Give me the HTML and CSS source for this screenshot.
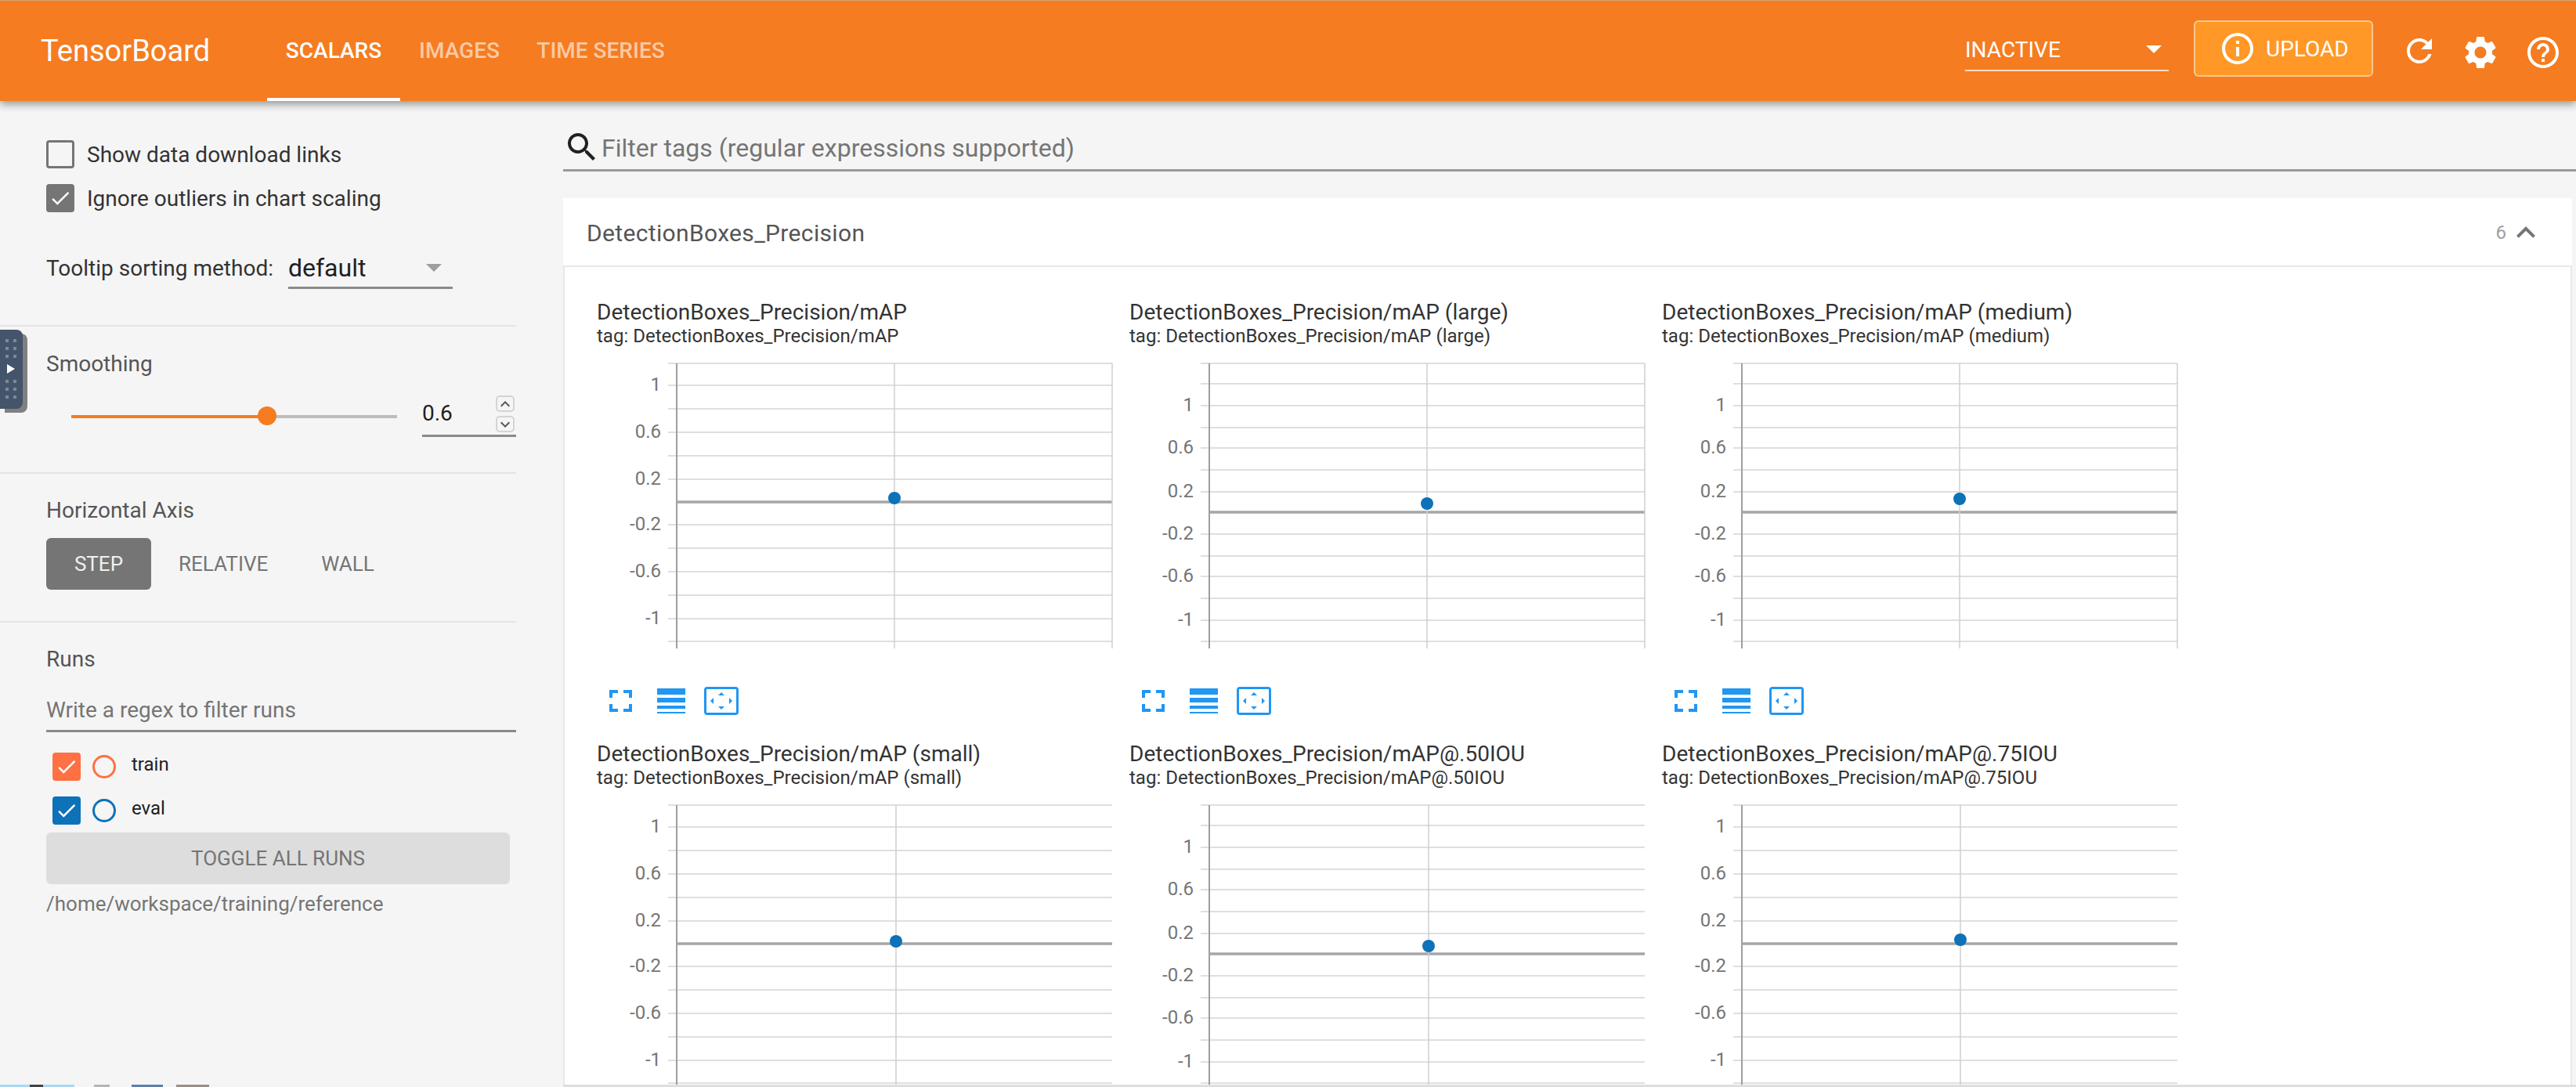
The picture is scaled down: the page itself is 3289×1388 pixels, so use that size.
FILE: index.html
```html
<!DOCTYPE html>
<html lang="en">
<head>
    <meta charset="UTF-8">
    <title>TensorBoard</title>
    <link rel="stylesheet" href="styles.css">
</head>
<body>
    <svg class="defs" width="0" height="0">
        <symbol id="grid-a" viewBox="0 0 662 370">
            <path class="grid" d="M91 4H658M91 32H658M91 62H658M91 92H658M91 122H658M91 152H658M91 210H658M91 240H658M91 270H658M91 300H658M91 330H658M91 359H658"/>
            <path class="axis" d="M102 4V368"/>
            <path class="zero" d="M102 181H658"/>
        </symbol>
        <symbol id="grid-b" viewBox="0 0 662 370">
            <path class="grid" d="M91 4H658M91 30H658M91 58H658M91 86H658M91 112H658M91 140H658M91 168H658M91 222H658M91 250H658M91 276H658M91 304H658M91 332H658M91 359H658"/>
            <path class="axis" d="M102 4V368"/>
            <path class="zero" d="M102 194H658"/>
        </symbol>
        <symbol id="ic-fullscreen" viewBox="0 0 29 28">
            <path d="M0 0H11V4H4V10H0ZM18 0H29V10H25V4H18ZM0 18H4V24H11V28H0ZM25 18H29V28H18V24H25Z"/>
        </symbol>
        <symbol id="ic-lines" viewBox="0 0 36 33">
            <path d="M0 0H36V8H0ZM0 12H36V18H0ZM0 22H36V26H0ZM0 30H36V32H0Z"/>
        </symbol>
        <symbol id="ic-fit" viewBox="0 0 44 36">
            <path fill-rule="evenodd" d="M4 0H40A4 4 0 0 1 44 4V32A4 4 0 0 1 40 36H4A4 4 0 0 1 0 32V4A4 4 0 0 1 4 0ZM3 3V33H41V3Z"/>
            <path d="M22 7L26 11H18ZM22 29L18 25H26ZM8 18L12 14V22ZM36 18L32 22V14Z"/>
        </symbol>
        <symbol id="ic-check" viewBox="0 0 24 24">
            <path d="M9 16.17L4.83 12l-1.42 1.41L9 19 21 7l-1.41-1.41z"/>
        </symbol>
        <symbol id="ic-chevron" viewBox="0 0 24 24">
            <path d="M7.41 15.41L12 10.83l4.59 4.58L18 14l-6-6-6 6z"/>
        </symbol>
    </svg>

    <header class="toolbar">
        <div class="brand">TensorBoard</div>
        <nav class="tabs">
            <a class="tab active">SCALARS</a>
            <a class="tab">IMAGES</a>
            <a class="tab">TIME SERIES</a>
        </nav>
        <div class="toolbar-right">
            <div class="inactive-select">
                <span>INACTIVE</span>
                <i class="caret caret-white"></i>
            </div>
            <button class="upload-btn">
                <svg viewBox="0 0 24 24" width="48" height="48"><path d="M11 7h2v2h-2zm0 4h2v6h-2zm1-9C6.48 2 2 6.48 2 12s4.48 10 10 10 10-4.48 10-10S17.52 2 12 2zm0 18c-4.41 0-8-3.59-8-8s3.59-8 8-8 8 3.59 8 8-3.59 8-8 8z"/></svg>
                UPLOAD
            </button>
            <svg class="tool-icon refresh" viewBox="0 0 24 24" width="48" height="48"><path d="M17.65 6.35C16.2 4.9 14.21 4 12 4c-4.42 0-7.99 3.58-7.99 8s3.57 8 7.99 8c3.73 0 6.84-2.55 7.73-6h-2.08c-.82 2.33-3.04 4-5.65 4-3.31 0-6-2.69-6-6s2.69-6 6-6c1.66 0 3.14.69 4.22 1.78L13 11h7V4l-2.35 2.35z"/></svg>
            <svg class="tool-icon gear" viewBox="0 0 24 24" width="50" height="50"><path d="M19.14 12.94c.04-.3.06-.61.06-.94 0-.32-.02-.64-.07-.94l2.03-1.58c.18-.14.23-.41.12-.61l-1.92-3.32c-.12-.22-.37-.29-.59-.22l-2.39.96c-.5-.38-1.03-.7-1.62-.94l-.36-2.54c-.04-.24-.24-.41-.48-.41h-3.84c-.24 0-.43.17-.47.41l-.36 2.54c-.59.24-1.13.57-1.62.94l-2.39-.96c-.22-.08-.47 0-.59.22L2.74 8.87c-.12.21-.08.47.12.61l2.03 1.58c-.05.3-.09.63-.09.94s.02.64.07.94l-2.03 1.58c-.18.14-.23.41-.12.61l1.92 3.32c.12.22.37.29.59.22l2.39-.96c.5.38 1.03.7 1.62.94l.36 2.54c.05.24.24.41.48.41h3.84c.24 0 .44-.17.47-.41l.36-2.54c.59-.24 1.13-.56 1.62-.94l2.39.96c.22.08.47 0 .59-.22l1.92-3.32c.12-.22.07-.47-.12-.61l-2.01-1.58zM12 15.6c-1.98 0-3.6-1.62-3.6-3.6s1.62-3.6 3.6-3.6 3.6 1.62 3.6 3.6-1.62 3.6-3.6 3.6z"/></svg>
            <svg class="tool-icon help" viewBox="0 0 24 24" width="48" height="48"><path d="M11 18h2v-2h-2v2zm1-16C6.48 2 2 6.48 2 12s4.48 10 10 10 10-4.48 10-10S17.52 2 12 2zm0 18c-4.41 0-8-3.59-8-8s3.59-8 8-8 8 3.59 8 8-3.59 8-8 8zm0-14c-2.21 0-4 1.79-4 4h2c0-1.1.9-2 2-2s2 .9 2 2c0 2-3 1.75-3 5h2c0-2.25 3-2.5 3-5 0-2.21-1.79-4-4-4z"/></svg>
        </div>
    </header>

    <div class="layout">
        <aside class="sidebar">
            <section class="side-section options">
                <label class="option"><span class="box"></span>Show data download links</label>
                <label class="option"><span class="box box-gray"><svg><use href="#ic-check"/></svg></span>Ignore outliers in chart scaling</label>
                <div class="tooltip-row">
                    <span>Tooltip sorting method:</span>
                    <div class="tooltip-select">default<i class="caret caret-gray"></i></div>
                </div>
            </section>

            <section class="side-section smoothing">
                <div class="side-title">Smoothing</div>
                <div class="slider-row">
                    <div class="slider">
                        <div class="slider-track"><div class="slider-fill"></div></div>
                        <div class="slider-thumb"></div>
                    </div>
                    <div class="number-input">
                        0.6
                        <div class="spin spin-up"><svg><use href="#ic-chevron"/></svg></div>
                        <div class="spin spin-down"><svg><use href="#ic-chevron"/></svg></div>
                    </div>
                </div>
            </section>

            <section class="side-section axis-section">
                <div class="side-title">Horizontal Axis</div>
                <div class="axis-buttons">
                    <div class="axis-btn step">STEP</div>
                    <div class="axis-btn relative">RELATIVE</div>
                    <div class="axis-btn wall">WALL</div>
                </div>
            </section>

            <section class="side-section runs">
                <div class="side-title">Runs</div>
                <div class="regex-input">Write a regex to filter runs</div>
                <div class="run-row">
                    <span class="box box-train"><svg><use href="#ic-check"/></svg></span>
                    <span class="ring ring-train"></span>
                    <span class="run-name">train</span>
                </div>
                <div class="run-row">
                    <span class="box box-eval"><svg><use href="#ic-check"/></svg></span>
                    <span class="ring ring-eval"></span>
                    <span class="run-name">eval</span>
                </div>
                <button class="toggle-btn">TOGGLE ALL RUNS</button>
                <div class="logdir">/home/workspace/training/reference</div>
            </section>
        </aside>

        <main class="content">
            <div class="filter-row">
                <svg class="search-icon" viewBox="0 0 24 24" width="48" height="48"><path d="M15.5 14h-.79l-.28-.27C15.41 12.59 16 11.11 16 9.5 16 5.91 13.09 3 9.5 3S3 5.91 3 9.5 5.91 16 9.5 16c1.61 0 3.09-.59 4.23-1.57l.27.28v.79l5 4.99L20.49 19l-4.99-5zm-6 0C7.01 14 5 11.99 5 9.5S7.01 5 9.5 5 14 7.01 14 9.5 11.99 14 9.5 14z"/></svg>
                <span>Filter tags (regular expressions supported)</span>
            </div>

            <div class="category">
                <div class="category-head">
                    <span class="category-name">DetectionBoxes_Precision</span>
                    <span class="category-count">6</span>
                    <svg class="category-chevron"><use href="#ic-chevron"/></svg>
                </div>
                <div class="tiles">
                    <div class="tile">
                        <div class="tile-title">DetectionBoxes_Precision/mAP</div>
                        <div class="tile-tag">tag: DetectionBoxes_Precision/mAP</div>
                        <svg class="chart" width="662" height="370" viewBox="0 0 662 370">
                            <use href="#grid-a" width="662" height="370"/>
                            <path class="axis-light" d="M658 4V368M380 4V368"/>
                            <text x="82" y="39">1</text><text x="82" y="99">0.6</text><text x="82" y="159">0.2</text>
                            <text x="82" y="217">-0.2</text><text x="82" y="277">-0.6</text><text x="82" y="337">-1</text>
                            <circle class="point" cx="380" cy="176" r="8"/>
                        </svg>
                        <div class="tile-actions">
                            <svg class="act-full"><use href="#ic-fullscreen"/></svg>
                            <svg class="act-lines"><use href="#ic-lines"/></svg>
                            <svg class="act-fit"><use href="#ic-fit"/></svg>
                        </div>
                    </div>
                    <div class="tile">
                        <div class="tile-title">DetectionBoxes_Precision/mAP (large)</div>
                        <div class="tile-tag">tag: DetectionBoxes_Precision/mAP (large)</div>
                        <svg class="chart" width="662" height="370" viewBox="0 0 662 370">
                            <use href="#grid-b" width="662" height="370"/>
                            <path class="axis-light" d="M658 4V368M380 4V368"/>
                            <text x="82" y="65">1</text><text x="82" y="119">0.6</text><text x="82" y="175">0.2</text>
                            <text x="82" y="229">-0.2</text><text x="82" y="283">-0.6</text><text x="82" y="339">-1</text>
                            <circle class="point" cx="380" cy="183" r="8"/>
                        </svg>
                        <div class="tile-actions">
                            <svg class="act-full"><use href="#ic-fullscreen"/></svg>
                            <svg class="act-lines"><use href="#ic-lines"/></svg>
                            <svg class="act-fit"><use href="#ic-fit"/></svg>
                        </div>
                    </div>
                    <div class="tile">
                        <div class="tile-title">DetectionBoxes_Precision/mAP (medium)</div>
                        <div class="tile-tag">tag: DetectionBoxes_Precision/mAP (medium)</div>
                        <svg class="chart" width="662" height="370" viewBox="0 0 662 370">
                            <use href="#grid-b" width="662" height="370"/>
                            <path class="axis-light" d="M658 4V368M380 4V368"/>
                            <text x="82" y="65">1</text><text x="82" y="119">0.6</text><text x="82" y="175">0.2</text>
                            <text x="82" y="229">-0.2</text><text x="82" y="283">-0.6</text><text x="82" y="339">-1</text>
                            <circle class="point" cx="380" cy="177" r="8"/>
                        </svg>
                        <div class="tile-actions">
                            <svg class="act-full"><use href="#ic-fullscreen"/></svg>
                            <svg class="act-lines"><use href="#ic-lines"/></svg>
                            <svg class="act-fit"><use href="#ic-fit"/></svg>
                        </div>
                    </div>
                    <div class="tile">
                        <div class="tile-title">DetectionBoxes_Precision/mAP (small)</div>
                        <div class="tile-tag">tag: DetectionBoxes_Precision/mAP (small)</div>
                        <svg class="chart" width="662" height="370" viewBox="0 0 662 370">
                            <use href="#grid-a" width="662" height="370"/>
                            <path class="axis-light" d="M382 4V368"/>
                            <text x="82" y="39">1</text><text x="82" y="99">0.6</text><text x="82" y="159">0.2</text>
                            <text x="82" y="217">-0.2</text><text x="82" y="277">-0.6</text><text x="82" y="337">-1</text>
                            <circle class="point" cx="382" cy="178" r="8"/>
                        </svg>
                    </div>
                    <div class="tile">
                        <div class="tile-title">DetectionBoxes_Precision/mAP@.50IOU</div>
                        <div class="tile-tag">tag: DetectionBoxes_Precision/mAP@.50IOU</div>
                        <svg class="chart" width="662" height="370" viewBox="0 0 662 370">
                            <use href="#grid-b" width="662" height="370"/>
                            <path class="axis-light" d="M382 4V368"/>
                            <text x="82" y="65">1</text><text x="82" y="119">0.6</text><text x="82" y="175">0.2</text>
                            <text x="82" y="229">-0.2</text><text x="82" y="283">-0.6</text><text x="82" y="339">-1</text>
                            <circle class="point" cx="382" cy="184" r="8"/>
                        </svg>
                    </div>
                    <div class="tile">
                        <div class="tile-title">DetectionBoxes_Precision/mAP@.75IOU</div>
                        <div class="tile-tag">tag: DetectionBoxes_Precision/mAP@.75IOU</div>
                        <svg class="chart" width="662" height="370" viewBox="0 0 662 370">
                            <use href="#grid-a" width="662" height="370"/>
                            <path class="axis-light" d="M381 4V368"/>
                            <text x="82" y="39">1</text><text x="82" y="99">0.6</text><text x="82" y="159">0.2</text>
                            <text x="82" y="217">-0.2</text><text x="82" y="277">-0.6</text><text x="82" y="337">-1</text>
                            <circle class="point" cx="381" cy="176" r="8"/>
                        </svg>
                    </div>
                </div>
            </div>
        </main>
    </div>

    <!-- page-capture handle that sits over the left edge -->
    <div class="side-handle">
        <div class="handle-dots"><i></i><i></i><i></i><i></i><i></i><i></i></div>
        <div class="handle-arrow"></div>
        <div class="handle-dots"><i></i><i></i><i></i><i></i><i></i><i></i></div>
    </div>

    <!-- sliver of the desktop taskbar at the very bottom of the capture -->
    <div class="taskbar-sliver">
        <i class="sliver-start"></i>
        <i class="sliver-a"></i>
        <i class="sliver-b"></i>
        <i class="sliver-c"></i>
    </div>
</body>
</html>
```

FILE: styles.css
```css
* {
    box-sizing: border-box;
}
html, body {
    margin: 0;
    height: 100%;
    overflow: hidden;
}
body {
    font-family: Roboto, "Liberation Sans", sans-serif;
    background-color: #f5f5f5;
    color: #212121;
    display: flex;
    flex-direction: column;
    font-size: 28px;
}
.defs {
    position: absolute;
}

/* toolbar */
.toolbar {
    height: 129px;
    flex: none;
    display: flex;
    align-items: center;
    padding-left: 52px;
    background-color: #f57c20;
    border-top: 1px solid #d9a679;
    box-shadow: 0 4px 10px rgba(0, 0, 0, 0.4);
    position: relative;
    z-index: 2;
    color: white;
}
.brand {
    font-size: 38px;
    width: 217px;
    margin-right: 72px;
    white-space: nowrap;
}
.tabs {
    display: flex;
    align-self: stretch;
}
.tab {
    width: 170px;
    display: flex;
    align-items: center;
    justify-content: center;
    font-weight: 500;
    color: rgba(255, 255, 255, 0.6);
    border-bottom: 4px solid transparent;
    padding-top: 2px;
}
.tab + .tab {
    width: 151px;
}
.tab:last-child {
    width: 210px;
}
.tab.active {
    color: white;
    border-bottom-color: white;
}
.toolbar-right {
    margin-left: auto;
    display: flex;
    align-items: center;
    height: 100%;
    padding-bottom: 2px;
}
.inactive-select {
    width: 251px;
    height: 36px;
    margin-top: 8px;
    box-sizing: content-box;
    display: flex;
    align-items: center;
    justify-content: space-between;
    font-size: 28px;
    padding-bottom: 8px;
    border-bottom: 2px solid #ffdcc0;
    padding-right: 9px;
}
.caret {
    display: block;
    width: 0;
    height: 0;
    border-left: 10px solid transparent;
    border-right: 10px solid transparent;
}
.caret-white {
    border-top: 10px solid white;
}
.caret-gray {
    border-top: 10px solid #9e9e9e;
}
.upload-btn {
    width: 229px;
    height: 72px;
    margin-left: 32px;
    margin-top: -4px;
    display: flex;
    align-items: center;
    padding: 0 0 0 30px;
    background-color: #ff9827;
    border: 2px solid #ffc78f;
    border-radius: 6px;
    color: white;
    font-family: inherit;
    font-size: 28px;
    font-weight: 400;
    gap: 12px;
}
.upload-btn svg, .tool-icon {
    fill: white;
    flex: none;
}
.tool-icon {
    margin-top: 6px;
}
.tool-icon.refresh {
    margin-left: 35px;
    margin-top: 2px;
}
.tool-icon.gear {
    margin-left: 29px;
}
.tool-icon.help {
    margin-left: 31px;
    margin-right: 18px;
}

/* layout */
.layout {
    flex: 1;
    display: flex;
    min-height: 0;
}
.sidebar {
    width: 719px;
    flex: none;
}
.side-section {
    width: 659px;
    padding-left: 59px;
    border-bottom: 2px solid #e4e4e4;
}
.side-title {
    line-height: 32px;
    color: #555;
}

/* options */
.options {
    padding-top: 50px;
    padding-bottom: 46px;
}
.option {
    display: flex;
    align-items: center;
    height: 36px;
    gap: 16px;
    color: #333;
}
.option + .option {
    margin-top: 20px;
}
.box {
    width: 36px;
    height: 36px;
    flex: none;
    border: 3px solid #757575;
    border-radius: 4px;
    display: flex;
    align-items: center;
    justify-content: center;
}
.box svg {
    width: 30px;
    height: 30px;
    fill: white;
    flex: none;
}
.box-gray {
    background-color: #757575;
}
.box-train {
    background-color: #ff7043;
    border-color: #ff7043;
}
.box-eval {
    background-color: #0d72b8;
    border-color: #0d72b8;
}
.tooltip-row {
    display: flex;
    align-items: flex-start;
    margin-top: 47px;
    height: 51px;
    line-height: 50px;
    color: #333;
}
.tooltip-select {
    width: 210px;
    height: 51px;
    margin-left: 19px;
    border-bottom: 3px solid #8a8a8a;
    font-size: 32px;
    display: flex;
    justify-content: space-between;
    align-items: center;
    padding-right: 14px;
    color: #212121;
}

/* smoothing */
.smoothing {
    padding-top: 32px;
    padding-bottom: 45px;
}
.slider-row {
    display: flex;
    margin-top: 24px;
    height: 53px;
}
.slider {
    position: relative;
    width: 416px;
    margin-left: 32px;
    display: flex;
    align-items: center;
}
.slider-track {
    width: 100%;
    height: 4px;
    background-color: #bdbdbd;
}
.slider-fill {
    width: 250px;
    height: 4px;
    background-color: #f57c20;
}
.slider-thumb {
    position: absolute;
    left: 238px;
    top: 14px;
    width: 24px;
    height: 24px;
    border-radius: 50%;
    background-color: #f57c20;
}
.number-input {
    position: relative;
    width: 120px;
    margin-left: 32px;
    border-bottom: 3px solid #8a8a8a;
    line-height: 46px;
    font-size: 28px;
}
.spin {
    position: absolute;
    right: 2px;
    width: 24px;
    height: 21px;
    border: 2px solid #d4d4d4;
    border-radius: 5px;
    display: flex;
    align-items: center;
    justify-content: center;
    background-color: #f5f5f5;
}
.spin svg {
    width: 24px;
    height: 24px;
    fill: #555;
    flex: none;
}
.spin-up {
    top: 0;
}
.spin-down {
    top: 26px;
}
.spin-down svg {
    transform: rotate(180deg);
}

/* horizontal axis */
.axis-section {
    padding-top: 31px;
    padding-bottom: 40px;
}
.axis-buttons {
    display: flex;
    margin-top: 19px;
}
.axis-btn {
    height: 66px;
    line-height: 66px;
    font-size: 26px;
    color: #757575;
    text-align: center;
}
.axis-btn.step {
    width: 134px;
    background-color: #757575;
    color: #f0f0f0;
    border-radius: 6px;
}
.axis-btn.relative {
    margin-left: 35px;
}
.axis-btn.wall {
    margin-left: 68px;
}

/* runs */
.runs {
    padding-top: 31px;
    border-bottom: none;
}
.regex-input {
    height: 54px;
    margin-top: 23px;
    line-height: 52px;
    border-bottom: 3px solid #8a8a8a;
    color: #757575;
}
.run-row {
    display: flex;
    align-items: center;
    height: 36px;
    margin-top: 20px;
    padding-left: 8px;
}
.regex-input + .run-row {
    margin-top: 26px;
}
.ring {
    width: 30px;
    height: 30px;
    margin-left: 15px;
    margin-right: 20px;
    border-radius: 50%;
    border: 3px solid;
}
.ring-train {
    border-color: #ff7043;
}
.ring-eval {
    border-color: #0d72b8;
}
.run-name {
    font-size: 24px;
    margin-bottom: 6px;
    color: #212121;
}
.toggle-btn {
    display: block;
    width: 592px;
    height: 66px;
    margin-top: 10px;
    border: none;
    border-radius: 6px;
    background-color: #dddddd;
    color: #757575;
    font-family: inherit;
    font-size: 26px;
}
.logdir {
    margin-top: 10px;
    line-height: 30px;
    font-size: 26px;
    color: #757575;
}

/* main column */
.content {
    flex: 1;
    min-width: 0;
    display: flex;
    flex-direction: column;
    overflow: hidden;
}
.filter-row {
    display: flex;
    align-items: center;
    flex: none;
    height: 90px;
    border-bottom: 3px solid #999;
    padding-top: 30px;
    font-size: 32px;
    color: #757575;
}
.filter-row span {
    margin-top: 2px;
}
.search-icon {
    fill: #212121;
    flex: none;
    margin-right: 1px;
}
.category {
    flex: 1;
    min-height: 0;
    overflow: hidden;
    margin-top: 34px;
    margin-right: 5px;
    background-color: white;
}
.category-head {
    display: flex;
    align-items: center;
    height: 88px;
    padding-left: 30px;
    padding-top: 2px;
    border-bottom: 2px solid #e8e8e8;
}
.category-name {
    font-size: 30px;
    letter-spacing: 0.35px;
    color: #555;
}
.category-count {
    margin-left: auto;
    font-size: 24px;
    color: #9e9e9e;
}
.category-chevron {
    width: 48px;
    height: 48px;
    fill: #757575;
    margin-left: 1px;
    margin-right: 35px;
}
.tiles {
    display: grid;
    grid-template-columns: repeat(3, 680px);
    grid-auto-rows: 564px;
    border-left: 2px solid #e8e8e8;
    border-right: 2px solid #e8e8e8;
    padding-top: 42px;
}
.tile {
    padding-left: 41px;
}
.tile-title {
    line-height: 32px;
    font-size: 28px;
    color: #333;
    white-space: nowrap;
}
.tile-tag {
    line-height: 26px;
    margin-top: 1px;
    font-size: 24px;
    color: #333;
    white-space: nowrap;
}
.chart {
    display: block;
    margin-top: 18px;
}
.chart text {
    font-size: 24px;
    fill: #757575;
    text-anchor: end;
}
.grid {
    stroke: #dfdfdf;
    stroke-width: 2;
    fill: none;
}
.axis {
    stroke: #9e9e9e;
    stroke-width: 2;
    fill: none;
}
.axis-light {
    stroke: #cfcfcf;
    stroke-width: 1.5;
    fill: none;
}
.zero {
    stroke: #a6a6a6;
    stroke-width: 3.5;
    fill: none;
}
.point {
    fill: #0d72b8;
}
.tile-actions {
    display: flex;
    align-items: center;
    margin-top: 47px;
    padding-left: 16px;
    height: 36px;
    fill: #2196f3;
}
.act-full {
    width: 29px;
    height: 28px;
    margin-right: 32px;
}
.act-lines {
    width: 36px;
    height: 33px;
    margin-right: 24px;
}
.act-fit {
    width: 44px;
    height: 36px;
}

/* extension handle */
.side-handle {
    position: absolute;
    left: 0;
    top: 421px;
    width: 29px;
    height: 101px;
    background-color: #44546a;
    border-radius: 0 8px 8px 0;
    box-shadow: 6px 5px 0 #808080;
    z-index: 3;
    padding-top: 12px;
}
.handle-dots {
    display: grid;
    grid-template-columns: 4px 4px;
    grid-auto-rows: 4px;
    gap: 6px;
    margin-left: 7px;
}
.handle-dots i {
    background-color: #7a8a9c;
}
.handle-arrow {
    width: 0;
    height: 0;
    margin: 8px 0 8px 9px;
    border-top: 6px solid transparent;
    border-bottom: 6px solid transparent;
    border-left: 10px solid white;
}

/* taskbar sliver */
.taskbar-sliver {
    position: absolute;
    left: 0;
    right: 0;
    bottom: 0;
    height: 3px;
    background: linear-gradient(to right, transparent 719px, #dedede 719px);
}
.taskbar-sliver i {
    position: absolute;
    top: 0;
    height: 3px;
}
.sliver-start {
    left: 0;
    width: 95px;
    background: linear-gradient(to right, #a9d8f5 38px, #444 38px, #444 55px, #a9d8f5 55px);
}
.sliver-a {
    left: 120px;
    width: 20px;
    background-color: #b5b5b5;
}
.sliver-b {
    left: 168px;
    width: 40px;
    background-color: #5f7da8;
}
.sliver-c {
    left: 225px;
    width: 42px;
    background-color: #9a8f86;
}
```
